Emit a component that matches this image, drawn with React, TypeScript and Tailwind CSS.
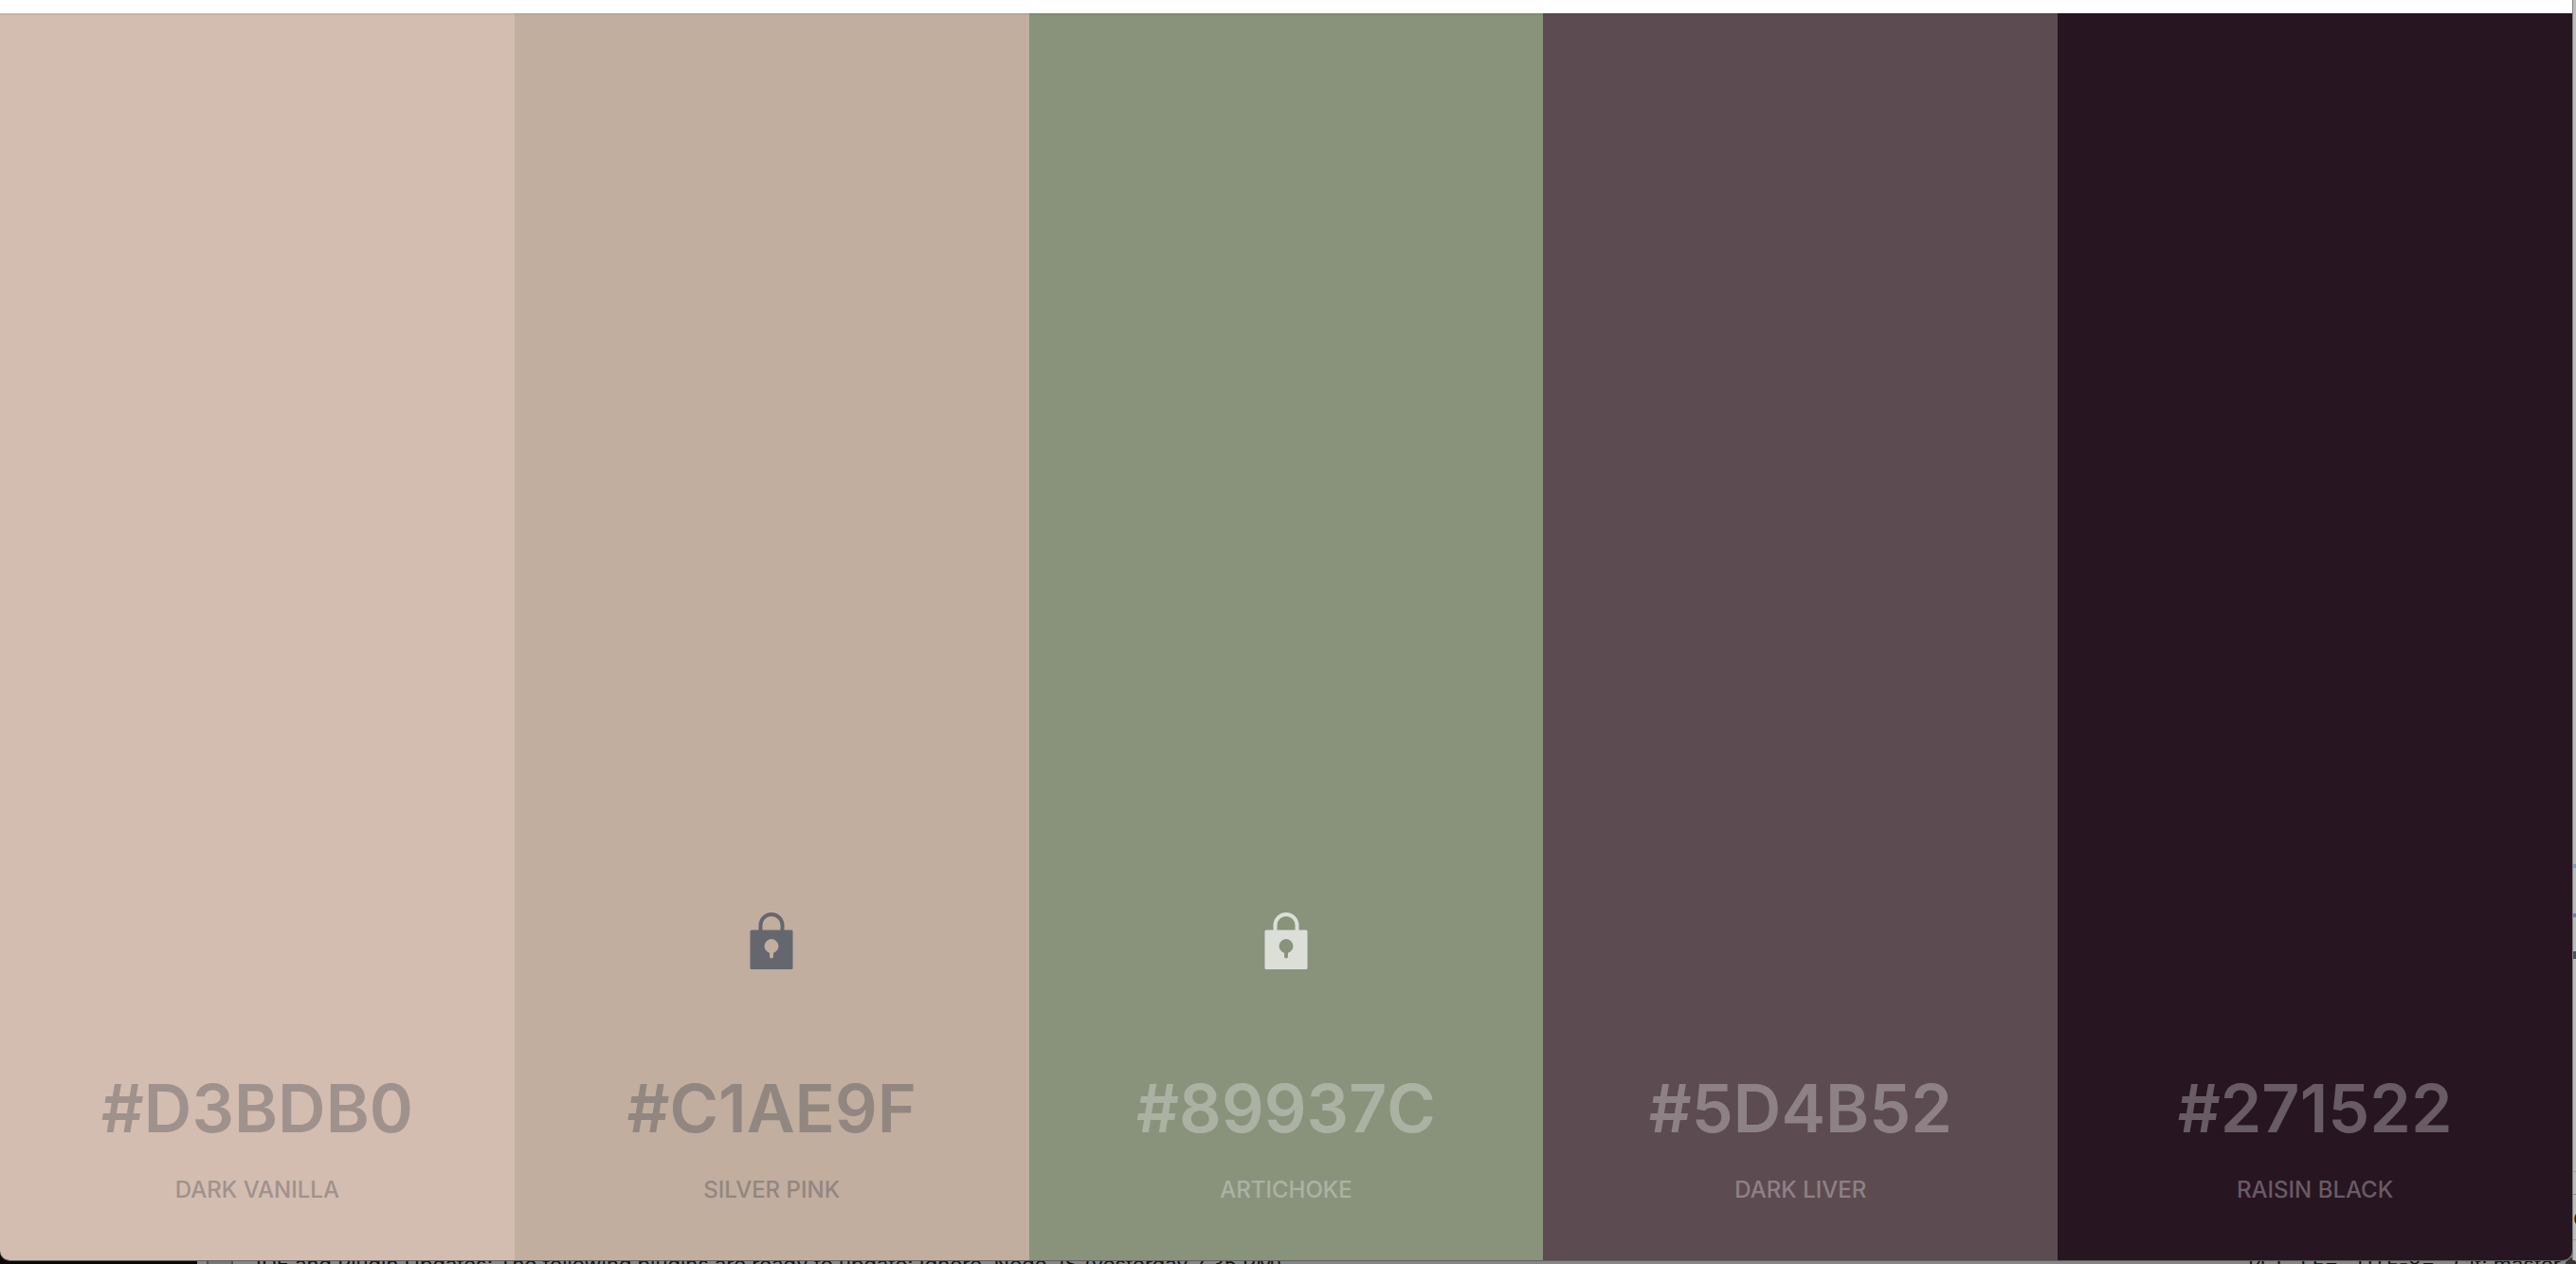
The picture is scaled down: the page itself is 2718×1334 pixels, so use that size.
type Swatch = {
  hex: string;
  name: string;
  bg: string;
  text: string;
  lock?: string;
};

const swatches: Swatch[] = [
  { hex: "#D3BDB0", name: "DARK VANILLA", bg: "bg-[#d3bdb0]", text: "text-[#9f928d]" },
  { hex: "#C1AE9F", name: "SILVER PINK", bg: "bg-[#c1ae9f]", text: "text-[#918780]", lock: "text-[#65676f]" },
  { hex: "#89937C", name: "ARTICHOKE", bg: "bg-[#89937c]", text: "text-[#abb2a3]", lock: "text-[#dcdfd8]" },
  { hex: "#5D4B52", name: "DARK LIVER", bg: "bg-[#5d4b52]", text: "text-[#8e8186]" },
  { hex: "#271522", name: "RAISIN BLACK", bg: "bg-[#271522]", text: "text-[#685b64]" },
];

function LockIcon() {
  return (
    <svg width="46" height="60" viewBox="0 0 46 60" aria-hidden="true">
      <path d="M11.5 20V13.5a11.5 11.5 0 0 1 23 0V20" fill="none" stroke="currentColor" strokeWidth="4" />
      <path
        fill="currentColor"
        fillRule="evenodd"
        d="M2 18.500H44Q45.500 18.500 45.500 20V58.500Q45.500 60 44 60H2Q.5 60 .5 58.500V20Q.5 18.500 2 18.500ZM23 28A7.500 7.500 0 0 0 21 42.700V46.500A2 2 0 0 0 25 46.500V42.700A7.500 7.500 0 0 0 23 28Z"
      />
    </svg>
  );
}

function Column({ swatch }: { swatch: Swatch }) {
  return (
    <section
      className={`flex min-w-0 flex-1 flex-col items-center justify-end border-t-2 border-black/5 pb-[58px] ${swatch.bg} ${swatch.text}`}
    >
      {swatch.lock && (
        <button type="button" aria-label={`Unlock ${swatch.name}`} className={`mb-[99px] ${swatch.lock}`}>
          <LockIcon />
        </button>
      )}
      <h2 className="text-[70px] leading-[96px] font-semibold">{swatch.hex}</h2>
      <p className="mt-[22px] text-[24px] leading-8 font-medium">{swatch.name}</p>
    </section>
  );
}

function EditorEdge() {
  return (
    <aside className="flex w-1 flex-col justify-end overflow-hidden border-l border-[#858585] bg-[#bdbdbd]">
      <div className="mb-12 h-1 bg-[#7ea3b5]" />
      <div className="mb-9 h-1 bg-[#6f86a8]" />
      <div className="mb-56 h-2 bg-[#4a5560]" />
      <div className="h-6 border-t border-[#a0a0a0]" />
      <div className="h-12 overflow-hidden border-t border-[#8d8d8d] text-[26px] leading-[48px] text-[#222222]">e</div>
      <div className="h-[22px] border-t border-[#a0a0a0]" />
    </aside>
  );
}

function StatusBar() {
  return (
    <footer className="-mt-3 flex h-4 shrink-0 overflow-hidden bg-[#868686] text-[22px] leading-8 whitespace-pre text-[#111111]">
      <div className="w-[208px] shrink-0 bg-[#0b0808]" />
      <div className="ml-2.5 w-7 shrink-0 border-x-2 border-[#4f4f4f] bg-[#777777]" />
      <p className="ml-6">
        IDE and Plugin Updates: The following plugins are ready to update: Ignore, Node JS (yesterday 7:35 PM)
      </p>
      <div className="ml-auto flex gap-5">
        <span>14:1</span>
        <span>LF÷</span>
        <span>UTF-8÷</span>
        <span>Git: master</span>
      </div>
      <svg width="12" height="16" viewBox="0 0 12 16" className="ml-1 shrink-0" aria-hidden="true">
        <path d="M7 9L12 14V16H1V14Z" fill="#333333" />
      </svg>
    </footer>
  );
}

export default function App() {
  return (
    <div className="flex h-screen flex-col overflow-hidden bg-[#868686] font-['Inter',sans-serif]">
      <div className="z-10 flex min-h-0 flex-1">
        <main className="flex min-w-0 flex-1 flex-col overflow-hidden rounded-b-[10px] shadow-[0_1px_0_#606060]">
          <div className="h-3.5 shrink-0 bg-white" />
          <div className="flex flex-1">
            {swatches.map((s) => (
              <Column key={s.hex} swatch={s} />
            ))}
          </div>
        </main>
        <EditorEdge />
      </div>
      <StatusBar />
    </div>
  );
}
